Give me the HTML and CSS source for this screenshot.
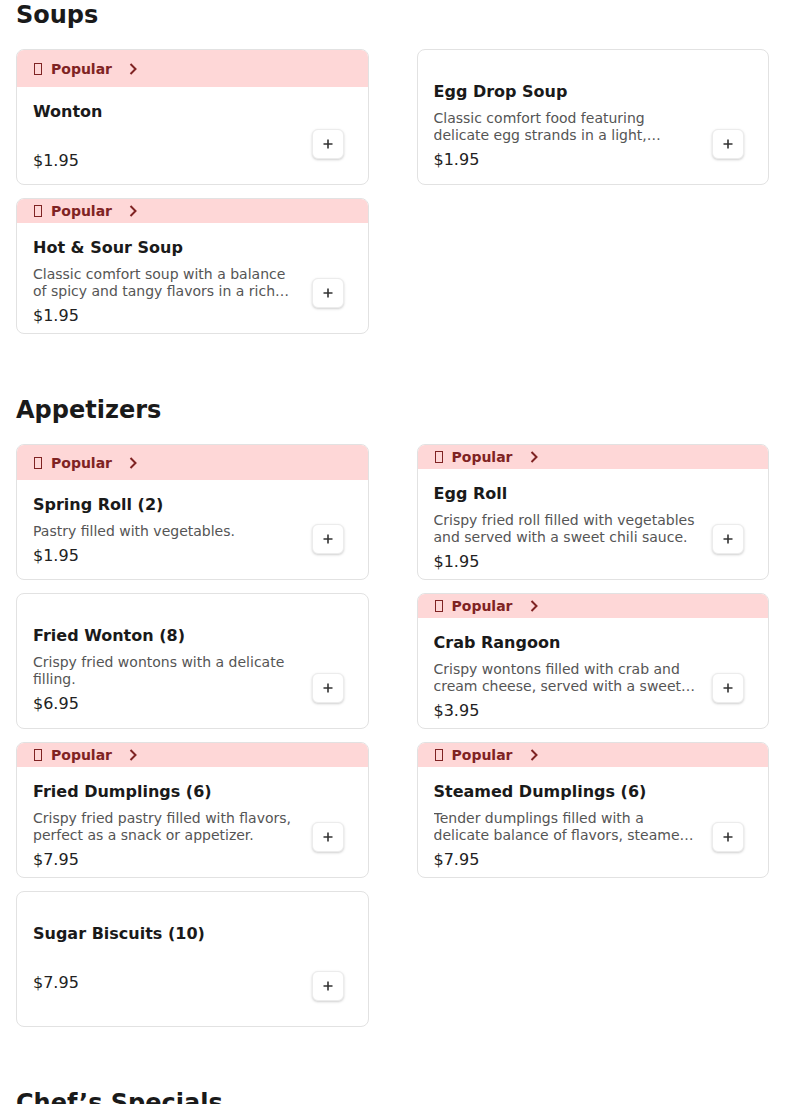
FILE: index.html
```html
<!DOCTYPE html>
<html lang="en">
<head>
    <meta charset="UTF-8">
    <meta name="viewport" content="width=device-width, initial-scale=1.0">
    <title>Menu</title>
    <link rel="stylesheet" href="styles.css">
</head>
<body>

    <main class="menu">

        <section class="category">
            <h2 class="category-title">Soups</h2>
            <div class="item-grid">
                <article class="item-card">
                    <div class="badge"><span class="badge-icon"></span><span>Popular</span><svg class="badge-chevron" width="10" height="14" viewBox="0 0 10 14"><polyline points="2.5,2 7.5,7 2.5,12" /></svg></div>
                    <div class="item-body">
                        <div class="item-info">
                            <h3 class="item-name">Wonton</h3>
                            <p class="item-desc"></p>
                            <p class="item-price">$1.95</p>
                        </div>
                        <button type="button" class="add-btn"><svg width="10" height="10" viewBox="0 0 10 10"><path d="M5 0.5v9M0.5 5h9" /></svg></button>
                    </div>
                </article>

                <article class="item-card plain">
                    <div class="item-body">
                        <div class="item-info">
                            <h3 class="item-name">Egg Drop Soup</h3>
                            <p class="item-desc">Classic comfort food featuring delicate egg strands in a light, flavorful chicken broth.</p>
                            <p class="item-price">$1.95</p>
                        </div>
                        <button type="button" class="add-btn"><svg width="10" height="10" viewBox="0 0 10 10"><path d="M5 0.5v9M0.5 5h9" /></svg></button>
                    </div>
                </article>

                <article class="item-card">
                    <div class="badge"><span class="badge-icon"></span><span>Popular</span><svg class="badge-chevron" width="10" height="14" viewBox="0 0 10 14"><polyline points="2.5,2 7.5,7 2.5,12" /></svg></div>
                    <div class="item-body">
                        <div class="item-info">
                            <h3 class="item-name">Hot &amp; Sour Soup</h3>
                            <p class="item-desc">Classic comfort soup with a balance of spicy and tangy flavors in a rich broth with tofu.</p>
                            <p class="item-price">$1.95</p>
                        </div>
                        <button type="button" class="add-btn"><svg width="10" height="10" viewBox="0 0 10 10"><path d="M5 0.5v9M0.5 5h9" /></svg></button>
                    </div>
                </article>
            </div>
        </section>

        <section class="category">
            <h2 class="category-title">Appetizers</h2>
            <div class="item-grid">
                <article class="item-card">
                    <div class="badge"><span class="badge-icon"></span><span>Popular</span><svg class="badge-chevron" width="10" height="14" viewBox="0 0 10 14"><polyline points="2.5,2 7.5,7 2.5,12" /></svg></div>
                    <div class="item-body">
                        <div class="item-info">
                            <h3 class="item-name">Spring Roll (2)</h3>
                            <p class="item-desc">Pastry filled with vegetables.</p>
                            <p class="item-price">$1.95</p>
                        </div>
                        <button type="button" class="add-btn"><svg width="10" height="10" viewBox="0 0 10 10"><path d="M5 0.5v9M0.5 5h9" /></svg></button>
                    </div>
                </article>

                <article class="item-card">
                    <div class="badge"><span class="badge-icon"></span><span>Popular</span><svg class="badge-chevron" width="10" height="14" viewBox="0 0 10 14"><polyline points="2.5,2 7.5,7 2.5,12" /></svg></div>
                    <div class="item-body">
                        <div class="item-info">
                            <h3 class="item-name">Egg Roll</h3>
                            <p class="item-desc">Crispy fried roll filled with vegetables and served with a sweet chili sauce.</p>
                            <p class="item-price">$1.95</p>
                        </div>
                        <button type="button" class="add-btn"><svg width="10" height="10" viewBox="0 0 10 10"><path d="M5 0.5v9M0.5 5h9" /></svg></button>
                    </div>
                </article>

                <article class="item-card plain">
                    <div class="item-body">
                        <div class="item-info">
                            <h3 class="item-name">Fried Wonton (8)</h3>
                            <p class="item-desc">Crispy fried wontons with a delicate filling.</p>
                            <p class="item-price">$6.95</p>
                        </div>
                        <button type="button" class="add-btn"><svg width="10" height="10" viewBox="0 0 10 10"><path d="M5 0.5v9M0.5 5h9" /></svg></button>
                    </div>
                </article>

                <article class="item-card">
                    <div class="badge"><span class="badge-icon"></span><span>Popular</span><svg class="badge-chevron" width="10" height="14" viewBox="0 0 10 14"><polyline points="2.5,2 7.5,7 2.5,12" /></svg></div>
                    <div class="item-body">
                        <div class="item-info">
                            <h3 class="item-name">Crab Rangoon</h3>
                            <p class="item-desc">Crispy wontons filled with crab and cream cheese, served with a sweet and sour sauce.</p>
                            <p class="item-price">$3.95</p>
                        </div>
                        <button type="button" class="add-btn"><svg width="10" height="10" viewBox="0 0 10 10"><path d="M5 0.5v9M0.5 5h9" /></svg></button>
                    </div>
                </article>

                <article class="item-card">
                    <div class="badge"><span class="badge-icon"></span><span>Popular</span><svg class="badge-chevron" width="10" height="14" viewBox="0 0 10 14"><polyline points="2.5,2 7.5,7 2.5,12" /></svg></div>
                    <div class="item-body">
                        <div class="item-info">
                            <h3 class="item-name">Fried Dumplings (6)</h3>
                            <p class="item-desc">Crispy fried pastry filled with flavors, perfect as a snack or appetizer.</p>
                            <p class="item-price">$7.95</p>
                        </div>
                        <button type="button" class="add-btn"><svg width="10" height="10" viewBox="0 0 10 10"><path d="M5 0.5v9M0.5 5h9" /></svg></button>
                    </div>
                </article>

                <article class="item-card">
                    <div class="badge"><span class="badge-icon"></span><span>Popular</span><svg class="badge-chevron" width="10" height="14" viewBox="0 0 10 14"><polyline points="2.5,2 7.5,7 2.5,12" /></svg></div>
                    <div class="item-body">
                        <div class="item-info">
                            <h3 class="item-name">Steamed Dumplings (6)</h3>
                            <p class="item-desc">Tender dumplings filled with a delicate balance of flavors, steamed to perfection.</p>
                            <p class="item-price">$7.95</p>
                        </div>
                        <button type="button" class="add-btn"><svg width="10" height="10" viewBox="0 0 10 10"><path d="M5 0.5v9M0.5 5h9" /></svg></button>
                    </div>
                </article>

                <article class="item-card plain">
                    <div class="item-body">
                        <div class="item-info">
                            <h3 class="item-name">Sugar Biscuits (10)</h3>
                            <p class="item-desc"></p>
                            <p class="item-price">$7.95</p>
                        </div>
                        <button type="button" class="add-btn"><svg width="10" height="10" viewBox="0 0 10 10"><path d="M5 0.5v9M0.5 5h9" /></svg></button>
                    </div>
                </article>
            </div>
        </section>

        <section class="category">
            <h2 class="category-title">Chef’s Specials</h2>
        </section>

    </main>

</body>
</html>
```

FILE: styles.css
```css
body {
    margin: 0;
    font-family: "DejaVu Sans", sans-serif;
    color: #1a1a1a;
    background: #fff;
}
.menu {
    padding: 0 16px;
}
.category + .category {
    margin-top: 61px;
}
.category-title {
    margin: 0 0 19px;
    font-size: 24px;
    line-height: 30px;
    font-weight: bold;
}
.item-grid {
    display: grid;
    grid-template-columns: 1fr 1fr;
    column-gap: 48px;
    row-gap: 13px;
}
.item-card {
    display: flex;
    flex-direction: column;
    box-sizing: border-box;
    height: 136px;
    border: 1px solid #e2e2e2;
    border-radius: 8px;
    background: #fff;
}
.item-card.plain {
    padding-top: 17px;
}
.badge {
    flex: 1 0 24px;
    display: flex;
    align-items: center;
    padding: 0 16px;
    border-radius: 7px 7px 0 0;
    background: #fed7d7;
    color: #7f2323;
    font-size: 14px;
    font-weight: bold;
    line-height: 16px;
}
.badge-icon {
    box-sizing: border-box;
    width: 8px;
    height: 12px;
    margin: 0 9px 0 1px;
    border: 1px solid #7f2323;
}
.badge-chevron {
    margin-left: 16px;
    fill: none;
    stroke: #7f2323;
    stroke-width: 2;
}
.item-body {
    flex: 0 1 auto;
    min-height: 0;
    display: flex;
    gap: 12px;
    padding: 13px 16px 11px;
}
.plain .item-body {
    flex-grow: 1;
}
.item-info {
    flex: 1;
    min-width: 0;
}
.item-name {
    margin: 0;
    font-size: 16px;
    line-height: 24px;
    font-weight: bold;
}
.item-desc {
    display: -webkit-box;
    -webkit-box-orient: vertical;
    -webkit-line-clamp: 2;
    overflow: hidden;
    min-height: 15px;
    margin: 6px 0 4px;
    font-size: 14px;
    line-height: 17px;
    color: #555;
}
.item-price {
    margin: 0;
    font-size: 16px;
    line-height: 24px;
    color: #222;
}
.add-btn {
    align-self: flex-end;
    flex: none;
    display: flex;
    align-items: center;
    justify-content: center;
    width: 32px;
    height: 30px;
    margin: 0 8px 14px 0;
    padding: 0;
    border: 1px solid #ececec;
    border-radius: 6px;
    background: #fff;
    box-shadow: 0 1px 3px rgba(0, 0, 0, 0.14), 0 1px 2px rgba(0, 0, 0, 0.06);
    cursor: pointer;
}
.add-btn svg {
    stroke: #333;
    stroke-width: 1.6;
}
```
